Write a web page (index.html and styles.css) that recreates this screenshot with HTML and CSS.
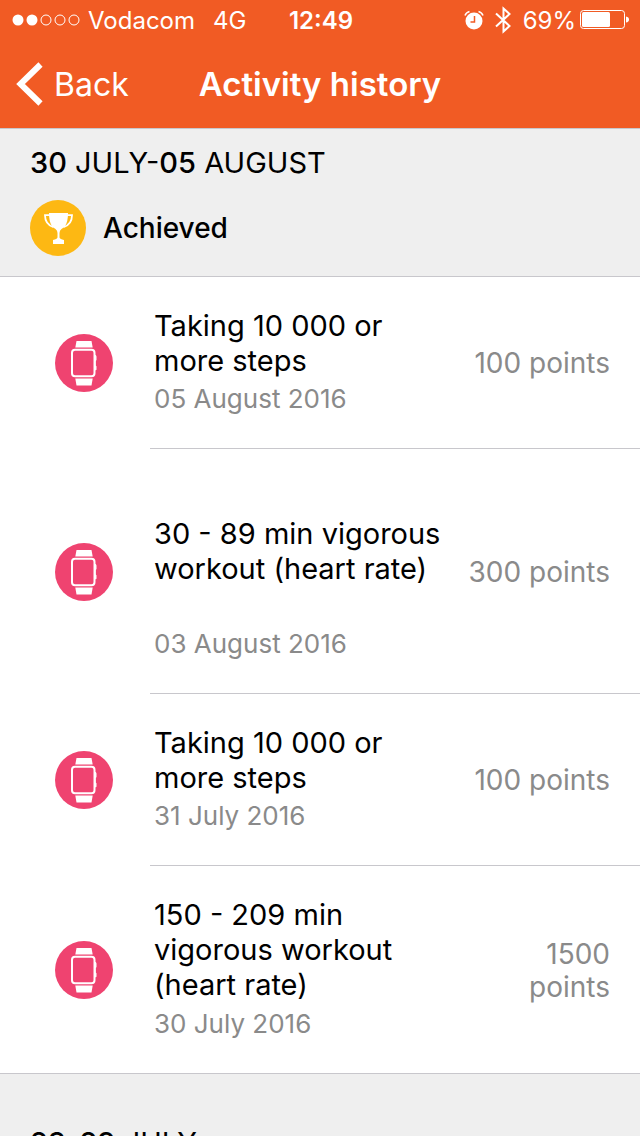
FILE: index.html
```html
<!DOCTYPE html>
<html lang="en">
<head>
<meta charset="utf-8">
<meta name="viewport" content="width=device-width, initial-scale=1">
<title>Activity history</title>
<link rel="stylesheet" href="styles.css">
</head>
<body>
<svg class="sprite" aria-hidden="true">
  <symbol id="watch" viewBox="0 0 58 58">
    <circle cx="29" cy="29" r="29" fill="#ef4370"/>
    <path d="M21.500 7h15l1.200 6.500h-17.400zM20.300 44.500h17.400l-1.200 7h-15z" fill="#fff"/>
    <rect x="17" y="15.800" width="22.500" height="26.400" rx="3" fill="none" stroke="#fff" stroke-width="2"/>
    <path d="M39.500 20.500q2 .5 2 2v3.500l-.7 1v4.500l.7.800v3.500l-2 1z" fill="#fff"/>
  </symbol>
</svg>
<div class="screen">
  <header class="topbar">
    <div class="status">
      <div class="status-left">
        <svg width="68" height="12" viewBox="0 0 68 12" role="img" aria-label="Signal 2 of 5">
          <circle cx="6" cy="6" r="5.500" fill="#fff"/><circle cx="20" cy="6" r="5.500" fill="#fff"/>
          <g fill="none" stroke="#fff"><circle cx="34" cy="6" r="5"/><circle cx="48" cy="6" r="5"/><circle cx="62" cy="6" r="5"/></g>
        </svg>
        <span>Vodacom</span>
        <span class="network">4G</span>
      </div>
      <span class="time">12:49</span>
      <div class="status-right">
        <svg width="20" height="20" viewBox="0 0 20 20" role="img" aria-label="Alarm">
          <circle cx="10" cy="11" r="8.500" fill="#fff"/>
          <path d="M1 5.500Q2 2.500 5.500 1.500M19 5.500Q18 2.500 14.500 1.500" fill="none" stroke="#fff" stroke-width="1.500"/>
          <path d="M10.500 6v6H6.500" fill="none" stroke="#f15b24" stroke-width="1.500"/>
        </svg>
        <svg class="bluetooth" width="16" height="28" viewBox="0 0 16 28" role="img" aria-label="Bluetooth">
          <path d="M1 7.500L14.500 20L8.500 25.500V2.500L14.500 8L1 20.500" fill="none" stroke="#fff" stroke-width="2"/>
        </svg>
        <span>69%</span>
        <svg class="battery" width="50" height="20" viewBox="0 0 50 20" role="img" aria-label="Battery">
          <rect x=".5" y=".5" width="44" height="18" rx="3" fill="none" stroke="#fff"/>
          <rect x="2" y="2" width="28" height="15" rx="1.500" fill="#fff"/>
          <path d="M46 6.500q3 .5 3 3t-3 3z" fill="#fff"/>
        </svg>
      </div>
    </div>
    <nav class="nav">
      <button class="back" type="button">
        <svg width="27" height="44" viewBox="0 0 27 44" aria-hidden="true"><path d="M24.500 2.500L4.500 22L24.500 41.500" fill="none" stroke="#fff" stroke-width="6"/></svg>
        <span>Back</span>
      </button>
      <h1 class="title">Activity history</h1>
    </nav>
  </header>
  <main>
    <section>
      <div class="week">
        <h2 class="range"><b>30</b> JULY-<b>05</b> AUGUST</h2>
        <div class="status-line">
          <svg width="56" height="56" viewBox="0 0 56 56" aria-hidden="true">
            <circle cx="28" cy="28" r="28" fill="#fdb813"/>
            <path d="M19 13h19q0 9-3 13-1.500 2-3.500 3-2 1.500-2 4v4.500q.5 1.500 4.500 2.500v4H23v-4q4-1 4.500-2.500V33q0-2.500-2-4-2-1-3.500-3-3-4-3-13z" fill="#fff"/>
            <path d="M20 15.200h-5q0 9 8.500 12M37 15.200h5q0 9-8.500 12" fill="none" stroke="#fff" stroke-width="1.800"/>
          </svg>
          <span>Achieved</span>
        </div>
      </div>
      <ul class="list">
        <li class="row">
          <svg class="icon" aria-hidden="true"><use href="#watch"/></svg>
          <div class="cell">
            <div class="text"><p class="name">Taking 10 000 or more steps</p><p class="date">05 August 2016</p></div>
            <span class="points">100 points</span>
          </div>
        </li>
        <li class="row">
          <svg class="icon" aria-hidden="true"><use href="#watch"/></svg>
          <div class="cell">
            <div class="text"><p class="name spaced">30 - 89 min vigorous workout (heart rate)</p><p class="date">03 August 2016</p></div>
            <span class="points">300 points</span>
          </div>
        </li>
        <li class="row">
          <svg class="icon" aria-hidden="true"><use href="#watch"/></svg>
          <div class="cell">
            <div class="text"><p class="name">Taking 10 000 or more steps</p><p class="date">31 July 2016</p></div>
            <span class="points">100 points</span>
          </div>
        </li>
        <li class="row">
          <svg class="icon" aria-hidden="true"><use href="#watch"/></svg>
          <div class="cell">
            <div class="text"><p class="name">150 - 209 min vigorous workout (heart rate)</p><p class="date">30 July 2016</p></div>
            <span class="points">1500 points</span>
          </div>
        </li>
      </ul>
    </section>
    <section>
      <div class="week next">
        <h2 class="range"><b>23</b>-<b>29</b> JULY</h2>
      </div>
    </section>
  </main>
</div>
</body>
</html>
```
FILE: styles.css
```css
* { box-sizing: border-box; }
body, h1, h2, p, ul { margin: 0; padding: 0; }
body {
  background: #fff;
  color: #000;
  font-family: Inter, "Liberation Sans", sans-serif;
}
.sprite { position: absolute; width: 0; height: 0; }
.screen { height: 100vh; overflow: hidden; }

.topbar { background: #f15b24; color: #fff; }
.status {
  display: grid;
  grid-template-columns: 1fr auto 1fr;
  align-items: center;
  height: 40px;
  padding: 0 10px 0 12px;
  font-size: 24px;
}
.status-left, .status-right { display: flex; align-items: center; }
.status-left { gap: 8px; }
.status-right { justify-content: flex-end; }
.network { margin-left: 10px; }
.time { font-weight: 600; }
.bluetooth { margin: 0 12px 0 11px; }
.battery { margin-left: 4px; }
.nav {
  display: grid;
  grid-template-columns: 1fr auto 1fr;
  align-items: center;
  height: 88px;
  padding: 0 16px;
}
.back {
  display: flex;
  align-items: center;
  gap: 11px;
  padding: 0;
  border: 0;
  background: none;
  color: inherit;
  font: inherit;
  font-size: 32px;
}
.title { font-size: 33px; font-weight: 600; }

.week {
  padding: 16px 30px 20px;
  background: #efefef;
  border-top: 1px solid #c8c7cc;
  border-bottom: 1px solid #c8c7cc;
}
.range { font-size: 29px; font-weight: 400; line-height: 36px; }
.range b { font-weight: 500; }
.status-line {
  display: flex;
  align-items: center;
  gap: 17px;
  margin-top: 19px;
  font-size: 28px;
  font-weight: 500;
}
.next { padding-top: 51px; }

.list { list-style: none; }
.row { display: flex; align-items: center; padding-left: 55px; }
.icon { flex: none; width: 58px; height: 58px; }
.cell {
  flex: 1;
  display: flex;
  align-items: center;
  gap: 12px;
  margin-left: 37px;
  padding: 31px 30px 33px 4px;
  border-bottom: 1px solid #c8c7cc;
}
.row:last-child .cell { border-bottom: 0; }
.text { flex: 1; }
.name { font-size: 29px; line-height: 35px; }
.spaced { padding: 36px 0; }
.date { margin-top: 5px; color: #8a8a8a; font-size: 26px; line-height: 32px; }
.row:last-child .date { margin-top: 6px; }
.points {
  width: 144px;
  padding-top: 4px;
  color: #8a8a8a;
  font-size: 28px;
  line-height: 33px;
  text-align: right;
}
.row:nth-child(2) .spaced { padding-bottom: 37px; }
```
